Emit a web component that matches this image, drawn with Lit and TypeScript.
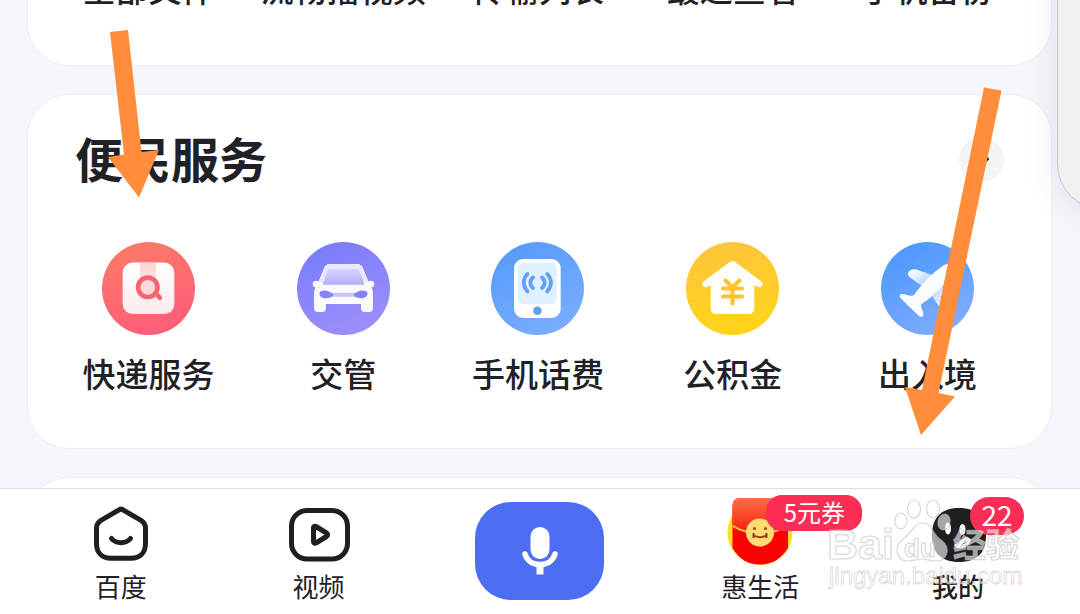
import { LitElement, html, css, svg } from "lit";
import { customElement } from "lit/decorators.js";

const parcelIcon = svg`
  <defs>
    <linearGradient id="parcel" x1="0.3" y1="0" x2="0.6" y2="1"><stop offset="0" stop-color="#fb7a68"/><stop offset="1" stop-color="#ff5c78"/></linearGradient>
    <linearGradient id="box" x1="0" y1="0" x2="0" y2="1"><stop offset="0" stop-color="#fff"/><stop offset="1" stop-color="#fdeaed"/></linearGradient>
    <linearGradient id="tape" x1="0" y1="0" x2="0" y2="1"><stop offset="0" stop-color="#fcd3d0"/><stop offset="1" stop-color="#fcd3d0" stop-opacity="0"/></linearGradient>
  </defs>
  <circle cx="46.5" cy="46.5" r="46.5" fill="url(#parcel)"/>
  <rect x="20.7" y="20.5" width="51.6" height="51.6" rx="10" fill="url(#box)"/>
  <path d="M38 20.5H54V62H38Z" fill="url(#tape)"/>
  <circle cx="45.8" cy="45.3" r="9.7" fill="#fbd9db" stroke="#f56470" stroke-width="4.6"/>
  <path d="M54 51.5L57.8 55.8" stroke="#f56470" stroke-width="4.6" stroke-linecap="round"/>`;

const carIcon = svg`
  <defs>
    <linearGradient id="car" x1="0.3" y1="0" x2="0.7" y2="1"><stop offset="0" stop-color="#7b7cfb"/><stop offset="1" stop-color="#9c90fb"/></linearGradient>
    <linearGradient id="glass" x1="0" y1="0" x2="0" y2="1"><stop offset="0" stop-color="#d5d5fe"/><stop offset="1" stop-color="#b0aefc"/></linearGradient>
  </defs>
  <circle cx="46.5" cy="46.5" r="46.5" fill="url(#car)"/>
  <path d="M33 22H60C63 22 65 23.5 66 26.5L71.5 39.5C74 38 77.3 39 77.3 42C77.3 44.5 76 45.3 74.3 45.3C75.6 47.3 76 49 76 51.5V66C76 68.7 74.5 70 72 70H68C65.4 70 64 68.6 64 66V62H29V66C29 68.6 27.6 70 25 70H21C18.5 70 17 68.7 17 66V51.5C17 49 17.5 47.3 18.7 45.3C17 45.3 15.7 44.5 15.7 42C15.7 39 19 38 21.5 39.5L27 26.5C28 23.5 30 22 33 22Z" fill="#fbfbff"/>
  <path d="M27 26.5C28 23.5 30 22 33 22H60C63 22 65 23.5 66 26.5L71 40H22Z" fill="#e9e8ff"/>
  <path d="M33.5 27H59.5C61 27 62 27.7 62.5 29L67.5 42.7H25.5L30.5 29C31 27.7 32 27 33.5 27Z" fill="url(#glass)"/>
  <path d="M30 50.8H63V54.8H30Z" fill="#c5c3fd"/>
  <path d="M22.5 51.5C22.5 47 33 47.5 36.5 53C33 57.5 22.5 57.5 22.5 51.5ZM70.5 51.5C70.5 47 60 47.5 56.5 53C60 57.5 70.5 57.5 70.5 51.5Z" fill="#8683f8"/>`;

const phoneIcon = svg`
  <defs><linearGradient id="phone" x1="0.2" y1="0" x2="0.7" y2="1"><stop offset="0" stop-color="#559bfb"/><stop offset="1" stop-color="#7badff"/></linearGradient></defs>
  <circle cx="46.5" cy="46.5" r="46.5" fill="url(#phone)"/>
  <rect x="23" y="17" width="46.7" height="59" rx="9" fill="#fff"/>
  <rect x="27" y="20.7" width="38.7" height="41.5" rx="6" fill="#e1f0fe"/>
  <g fill="none" stroke="#639ff5" stroke-width="3.8" stroke-linecap="round">
    <path d="M36.5 32C31.5 37 31.5 44 36.5 49.5M42 35.5C38.5 38.5 38.5 43 42 46M56.2 32C61.2 37 61.2 44 56.2 49.5M51 35.5C54.5 38.5 54.5 43 51 46"/>
  </g>
  <circle cx="46.4" cy="68.7" r="4.3" fill="#639ff5"/>`;

const houseIcon = svg`
  <defs><linearGradient id="house" x1="0.4" y1="0" x2="0.6" y2="1"><stop offset="0" stop-color="#fec53c"/><stop offset="1" stop-color="#ffd518"/></linearGradient></defs>
  <circle cx="46.5" cy="46.5" r="46.5" fill="url(#house)"/>
  <path d="M43.5 20.3C45.5 18.7 47.5 18.7 49.5 20.3L75.5 39.5C78.5 42 75.5 46.5 71.5 44.8L68.3 43V66C68.3 70 66.3 72 62.3 72H30.7C26.7 72 24.7 70 24.7 66V43L21.5 44.8C17.5 46.5 14.5 42 17.5 39.5Z" fill="#fff"/>
  <path d="M39.5 38.5L46.5 45.5L53.5 38.5M37 46.5H56M37 54.5H56M46.5 46V61.5" fill="none" stroke="#ffc42f" stroke-width="4.2" stroke-linecap="round" stroke-linejoin="round"/>`;

const planeIcon = svg`
  <defs>
    <linearGradient id="sky" x1="0.2" y1="0" x2="0.8" y2="1"><stop offset="0" stop-color="#4b97fc"/><stop offset="1" stop-color="#82adff"/></linearGradient>
    <linearGradient id="wing" x1="0" y1="0" x2="1" y2="1"><stop offset="0.2" stop-color="#f2f8ff"/><stop offset="1" stop-color="#9fc6fd"/></linearGradient>
    <linearGradient id="wing2" x1="1" y1="1" x2="0" y2="0"><stop offset="0.2" stop-color="#f2f8ff"/><stop offset="1" stop-color="#9fc6fd"/></linearGradient>
  </defs>
  <circle cx="46.5" cy="46.5" r="46.5" fill="url(#sky)"/>
  <path d="M31 27.5C34 26.8 37 27.8 39.5 29L54 34L42 45L29 35.5C25.5 32.5 27 28.5 31 27.5Z" fill="url(#wing)"/>
  <path d="M66 62.5C66.7 59.5 65.5 56 64.5 53.5L60 40L49 51L58 64.5C61 68 65 66.5 66 62.5Z" fill="url(#wing2)"/>
  <path d="M33 53C40 43 51 31 61 24.5C66 21 73 20.5 74 21.5C75 23 73.5 29 70.5 33.5C63 44 50 56 40 62.5C39.5 65.5 43 70 42.3 73.5C41.5 75.5 39 75 37.5 73.5C31.5 68 26 62.5 20 56.5C18 54.5 18.5 52 21 52C25 52 29 55 33 53Z" fill="#fafdff"/>`;

const homeTab = svg`
  <path d="M30.5 8.2C32 7 34 7 35.5 8.2L53 18.3C56 20.2 57.5 22.5 57.5 26V41.5C57.5 50.5 52 56.2 43 56.2H23C14 56.2 8.5 50.5 8.5 41.5V26C8.5 22.5 10 20.2 13 18.3Z" fill="none" stroke="#1f1f1f" stroke-width="5"/>
  <path d="M23.5 36.5C28 42 38 42 42.5 36.5" fill="none" stroke="#1f1f1f" stroke-width="5" stroke-linecap="round"/>`;

const videoTab = svg`
  <rect x="5.5" y="8.5" width="56" height="48.5" rx="15.5" fill="none" stroke="#1f1f1f" stroke-width="5"/>
  <path d="M27.5 25.5C27.5 24.2 29 23.8 30 24.5L40.5 31C42 32.2 42 33.5 40.5 34.5L30 41C29 41.7 27.5 41.2 27.5 39.8Z" fill="none" stroke="#1f1f1f" stroke-width="5" stroke-linejoin="round"/>`;

const packetTab = svg`
  <defs><linearGradient id="flap" x1="0" y1="0" x2="0" y2="1"><stop offset="0" stop-color="#fd7045"/><stop offset="1" stop-color="#f91a0c"/></linearGradient>
  <clipPath id="packet"><path d="M14 -4H52C58 -4 61 -1 61 5V46C54 57 45 62.5 33 62.5C21 62.5 12 57 5.5 46V5C5.5 -1 8 -4 14 -4Z"/></clipPath></defs>
  <circle cx="33" cy="30.5" r="32.5" fill="#ffdc25"/>
  <g clip-path="url(#packet)">
    <path d="M0 -5H66V66H0Z" fill="#f90404"/>
    <path d="M5 -4H61V24C44 35 22 35 5 24Z" fill="url(#flap)"/>
    <path d="M5 23.5C22 34 44 34 61 23.5" fill="none" stroke="#ffc13c" stroke-width="2"/>
  </g>
  <circle cx="33" cy="30.5" r="14" fill="#ffdc72"/>
  <circle cx="27.5" cy="26.5" r="1.6" fill="#a8481a"/>
  <circle cx="38.5" cy="26.5" r="1.6" fill="#a8481a"/>
  <path d="M26.5 31V36M39.5 31V36M26.5 33C30 36 36 36 39.5 33" fill="none" stroke="#9e3c16" stroke-width="2"/>`;

const mineTab = svg`
  <path d="M34 6C50 6 61 14 61 33C61 51 52 60 34 60C16 60 7 51 7 33C7 14 18 6 34 6Z" fill="#1f1f1f"/>
  <ellipse cx="23" cy="26.5" rx="3" ry="6" fill="#fff"/>
  <ellipse cx="37.5" cy="27.5" rx="3" ry="5.5" fill="#fff"/>
  <path d="M31 43.5C35 42 38 39 42 36.5M31 43.5C36 46 42 44 44 38" fill="none" stroke="#fff" stroke-width="3.5" stroke-linecap="round"/>`;

const recent = ["全部文件", "流畅播视频", "传输列表", "最近查看", "手机备份"];
const services = [
  { label: "快递服务", icon: parcelIcon },
  { label: "交管", icon: carIcon },
  { label: "手机话费", icon: phoneIcon },
  { label: "公积金", icon: houseIcon },
  { label: "出入境", icon: planeIcon },
];

@customElement("app-root")
export class AppRoot extends LitElement {
  static styles = css`
    :host {
      display: flex;
      flex-direction: column;
      position: relative;
      height: 100vh;
      overflow: hidden;
      background: #f4f6fb;
      color: #1f2126;
      font-family: "Noto Sans CJK SC", sans-serif;
    }
    * { box-sizing: border-box; }
    a { color: inherit; text-decoration: none; }
    svg { display: block; overflow: visible; }
    main { flex: 1; min-height: 0; overflow: hidden; }
    .feed {
      display: flex;
      flex-direction: column;
      gap: 28px;
      padding: 0 28px 0 27px;
      margin-top: -60px;
    }
    .card {
      background: #fff;
      border: 1px solid #eceef2;
      border-radius: 42px;
      padding: 32px 26px 52px 23px;
    }
    .card.recent { padding-top: 24px; padding-bottom: 54px; }
    .head {
      display: flex;
      align-items: center;
      justify-content: space-between;
      height: 64px;
      padding: 0 21px 0 24px;
      margin-bottom: 51px;
    }
    h2 { margin: 0; padding-bottom: 4px; font-size: 48px; line-height: 58px; font-weight: 700; }
    .more {
      width: 45px;
      height: 45px;
      padding: 0;
      border: 0;
      border-radius: 50%;
      background: #f4f4f7;
      display: grid;
      place-items: center;
    }
    .grid { display: grid; grid-template-columns: repeat(5, 1fr); }
    .service {
      display: flex;
      flex-direction: column;
      align-items: center;
      gap: 15px;
      font-size: 33px;
      line-height: 46px;
      font-weight: 500;
      white-space: nowrap;
    }
    nav {
      display: grid;
      grid-template-columns: 1fr 1fr 244px 1fr 1fr;
      align-items: start;
      padding: 13px 23px 10px 22px;
      background: #fff;
      border-top: 1px solid #dfe0e3;
    }
    .tab {
      display: flex;
      flex-direction: column;
      align-items: center;
      font-size: 26px;
      line-height: 36px;
    }
    .tab.current { font-weight: 500; }
    .glyph { position: relative; width: 66px; height: 66px; }
    .badge {
      position: absolute;
      display: grid;
      place-items: center;
      color: #fff;
      background: #fd2d55;
      font-weight: 400;
      white-space: nowrap;
    }
    .coupon { left: 39px; top: -7px; width: 96px; height: 36px; border-radius: 16px; font-size: 24px; line-height: 34px; padding-bottom: 2px; }
    .count { left: 45px; top: -5px; width: 54px; height: 38px; border-radius: 19px; font-size: 28px; line-height: 34px; padding-bottom: 4px; }
    .voice {
      justify-self: center;
      width: 129px;
      height: 98px;
      padding: 0;
      border: 0;
      border-radius: 36px;
      background: #4d6ef2;
      display: grid;
      place-items: center;
    }
    .drawer {
      position: absolute;
      top: -60px;
      right: -97px;
      width: 120px;
      height: 270px;
      border: 1px solid #c4c5c8;
      border-radius: 46px;
      background: #f1f1f1;
      box-shadow: 0 0 36px rgba(40, 50, 80, 0.1);
    }
    .overlay { position: absolute; left: 0; top: 0; pointer-events: none; }
    .brand { font-family: "Liberation Sans", "Noto Sans CJK SC", sans-serif; }
  `;

  render() {
    return html`
      <main>
        <div class="feed">
          <section class="card recent">
            <div class="grid">
              ${recent.map((label) => html`<a class="service" href="#">${label}</a>`)}
            </div>
          </section>
          <section class="card">
            <div class="head">
              <h2>便民服务</h2>
              <button class="more" aria-label="更多">
                <svg width="16" height="16" viewBox="0 0 16 16"><path d="M9 3L14 8L9 13" fill="none" stroke="#222" stroke-width="2"/></svg>
              </button>
            </div>
            <div class="grid">
              ${services.map(
                (s) => html`<a class="service" href="#">
                  <svg width="93" height="93" viewBox="0 0 93 93" aria-hidden="true">${s.icon}</svg>
                  <span>${s.label}</span>
                </a>`
              )}
            </div>
          </section>
          <section class="card"></section>
        </div>
      </main>
      <nav>
        <a class="tab" href="#"><span class="glyph"><svg width="66" height="66">${homeTab}</svg></span>百度</a>
        <a class="tab" href="#"><span class="glyph"><svg width="66" height="66">${videoTab}</svg></span>视频</a>
        <button class="voice" aria-label="语音">
          <svg width="36" height="48" viewBox="0 0 36 48">
            <rect x="8.5" y="0" width="19" height="32" rx="9.5" fill="#fff"/>
            <path d="M3 27C5 34 11 37.5 18 37.5S31 34 33 27" fill="none" stroke="#fff" stroke-width="5.5" stroke-linecap="round"/>
            <path d="M14.5 38H21.5V47.5H14.5Z" fill="#fff"/>
          </svg>
        </button>
        <a class="tab" href="#"><span class="glyph"><svg width="66" height="66">${packetTab}</svg><span class="badge coupon">5元券</span></span>惠生活</a>
        <a class="tab current" href="#"><span class="glyph"><svg width="66" height="66">${mineTab}</svg><span class="badge count">22</span></span>我的</a>
      </nav>
      <div class="drawer"></div>
      <svg class="overlay" width="1080" height="614" viewBox="0 0 1080 614">
        <g fill="#ff8d3a">
          <path d="M110 32L128 30L141.5 152L159 150L139 197.5L108 157L124 154.5Z"/>
          <path d="M984 87.5L1001.5 90.5L938.5 393L955 396.5L921 435L905 387L922 390Z"/>
        </g>
        <g class="brand" fill="#fff" fill-opacity="0.6" stroke="#bdbdbd" stroke-opacity="0.6" stroke-width="1.2">
          <ellipse cx="901" cy="521" rx="6" ry="8"/>
          <ellipse cx="914" cy="509" rx="6.5" ry="9"/>
          <ellipse cx="933" cy="509" rx="6.5" ry="9"/>
          <ellipse cx="944" cy="522" rx="6" ry="8" transform="rotate(12 944 522)"/>
          <path d="M923 523C932 523 932 534 941 540C952 548 947 561 936 561C930 561 926 559 922 559C917 559 914 561 908 561C897 561 893 548 902 540C911 534 914 523 923 523Z"/>
          <text x="827" y="559" font-size="43" font-weight="700">Bai</text>
          <text x="904" y="557" font-size="26" font-weight="700">du</text>
          <text x="953" y="557" font-size="33" font-weight="700">经验</text>
          <text x="829" y="584" font-size="24" font-weight="400" stroke-width="0.8">jingyan.baidu.com</text>
        </g>
      </svg>
    `;
  }
}
